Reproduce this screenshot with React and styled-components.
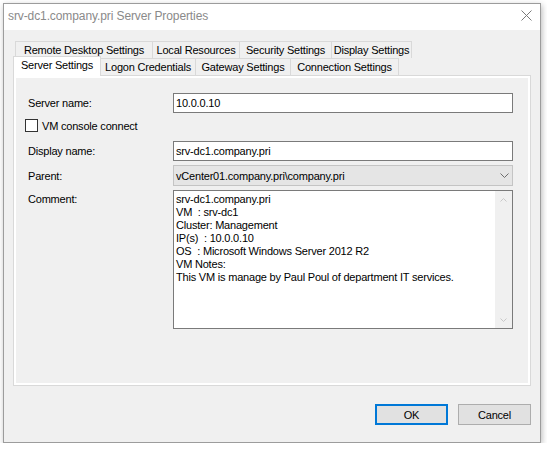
import React from "react";
import styled, { createGlobalStyle } from "styled-components";

const GlobalStyle = createGlobalStyle`
  html, body { margin: 0; padding: 0; background: #ffffff; }
  body {
    font-family: "Liberation Sans", Arial, sans-serif;
    font-size: 11px;
    letter-spacing: -0.2px;
    color: #000;
  }
  * { box-sizing: border-box; }
`;

const Page = styled.div`
  padding: 3px 0 0 3px;
`;

const Window = styled.div`
  width: 538px;
  height: 440px;
  border: 1px solid #9c9c9c;
  box-shadow: 1px 2px 6px rgba(0, 0, 0, 0.28);
  display: flex;
  flex-direction: column;
  background: #f0f0f0;
`;

const TitleBar = styled.div`
  height: 26px;
  background: #ffffff;
  display: flex;
  align-items: center;
  justify-content: space-between;
  padding: 0 8px 3px 4px;
`;

const Title = styled.span`
  font-size: 12px;
  letter-spacing: -0.1px;
  color: #8a8a8a;
`;

const Body = styled.div`
  flex: 1;
  display: flex;
  flex-direction: column;
  padding: 11px 9px 0 9px;
`;

const TabControl = styled.div`
  width: 518px;
  display: flex;
  flex-direction: column;
`;

const TabRow = styled.div`
  display: flex;
  height: 17px;
  padding-left: ${(p) => p.$offset}px;
`;

const Tab = styled.div`
  position: relative;
  width: ${(p) => p.$w}px;
  height: ${(p) => (p.$active ? 20 : 17)}px;
  margin-top: ${(p) => (p.$active ? -2 : 0)}px;
  z-index: ${(p) => (p.$active ? 2 : 1)};
  background: ${(p) => (p.$active ? "#ffffff" : "#f0f0f0")};
  border: 1px solid #d9d9d9;
  border-bottom: none;
  display: flex;
  align-items: ${(p) => (p.$active ? "flex-start" : "center")};
  padding-top: ${(p) => (p.$active ? 2 : 0)}px;
  justify-content: center;
  white-space: nowrap;
  & + & {
    margin-left: -1px;
  }
`;

const Panel = styled.div`
  height: 311px;
  border: 1px solid #d9d9d9;
  background: #ffffff;
  padding: 2px;
`;

const PageArea = styled.div`
  height: 100%;
  background: #f0f0f0;
  display: flex;
  flex-direction: column;
  padding: 15px 0 0 12px;
`;

const FieldRow = styled.div`
  display: flex;
  align-items: ${(p) => (p.$top ? "flex-start" : "center")};
  margin-top: ${(p) => p.$mt}px;
`;

const Label = styled.div`
  width: 145px;
  flex: none;
  padding-top: ${(p) => (p.$top ? 3 : 0)}px;
`;

const TextInput = styled.input`
  width: 340px;
  height: 20px;
  border: 1px solid #7a7a7a;
  background: #ffffff;
  padding: 0 2px;
  margin: 0;
  font-family: inherit;
  font-size: 11px;
  letter-spacing: -0.2px;
  color: #000;
  outline: none;
`;

const CheckRow = styled.label`
  display: flex;
  align-items: center;
  gap: 4px;
  margin-top: ${(p) => p.$mt}px;
  margin-left: -3px;
  height: 13px;
`;

const CheckBox = styled.span`
  width: 13px;
  height: 13px;
  border: 1px solid #333333;
  background: #ffffff;
  flex: none;
`;

const ComboBox = styled.div`
  width: 340px;
  height: 21px;
  border: 1px solid #c4c4c4;
  background: #e5e5e5;
  display: flex;
  align-items: center;
  padding: 0 3px 0 2px;
`;

const ComboText = styled.span`
  flex: 1;
`;

const CommentBox = styled.div`
  width: 340px;
  height: 139px;
  border: 1px solid #7a7a7a;
  background: #ffffff;
  display: flex;
`;

const CommentText = styled.div`
  flex: 1;
  white-space: pre;
  line-height: 13px;
  padding: 2px 2px;
`;

const ScrollBar = styled.div`
  width: 17px;
  background: #f0f0f0;
  display: flex;
  flex-direction: column;
  justify-content: space-between;
  align-items: center;
  padding: 7px 0 6px;
`;

const Footer = styled.div`
  display: flex;
  justify-content: flex-end;
  gap: 10px;
  margin-top: 18px;
`;

const Button = styled.button`
  width: 73px;
  height: 21px;
  margin: 0;
  padding: 0;
  background: #e1e1e1;
  border: ${(p) => (p.$default ? "2px solid #0078d7" : "1px solid #adadad")};
  font-family: inherit;
  font-size: 11px;
  letter-spacing: -0.2px;
  color: #000;
`;

const Chevron = ({ up, color, w = 9, h = 5 }) => (
  <svg width={w} height={h} viewBox={`0 0 ${w} ${h}`}>
    <polyline
      points={up ? `0.5,${h - 0.5} ${w / 2},0.5 ${w - 0.5},${h - 0.5}` : `0.5,0.5 ${w / 2},${h - 0.5} ${w - 0.5},0.5`}
      fill="none"
      stroke={color}
      strokeWidth="1"
    />
  </svg>
);

const CloseIcon = () => (
  <svg width="11" height="11" viewBox="0 0 11 11">
    <path d="M0.5 0.5 L10.5 10.5 M10.5 0.5 L0.5 10.5" stroke="#7a7a7a" strokeWidth="1" fill="none" />
  </svg>
);

const backTabs = [
  { label: "Remote Desktop Settings", w: 138 },
  { label: "Local Resources", w: 88 },
  { label: "Security Settings", w: 93 },
  { label: "Display Settings", w: 81 },
];

const frontTabs = [
  { label: "Server Settings", w: 88, active: true },
  { label: "Logon Credentials", w: 96 },
  { label: "Gateway Settings", w: 96 },
  { label: "Connection Settings", w: 109 },
];

const comment = [
  "srv-dc1.company.pri",
  "VM  : srv-dc1",
  "Cluster: Management",
  "IP(s)  : 10.0.0.10",
  "OS  : Microsoft Windows Server 2012 R2",
  "VM Notes:",
  "This VM is manage by Paul Poul of department IT services.",
].join("\n");

export default function App() {
  return (
    <>
      <GlobalStyle />
      <Page>
        <Window>
          <TitleBar>
            <Title>srv-dc1.company.pri Server Properties</Title>
            <CloseIcon />
          </TitleBar>
          <Body>
            <TabControl>
              <TabRow $offset={2}>
                {backTabs.map((t) => (
                  <Tab key={t.label} $w={t.w}>
                    {t.label}
                  </Tab>
                ))}
              </TabRow>
              <TabRow $offset={0}>
                {frontTabs.map((t) => (
                  <Tab key={t.label} $w={t.w} $active={t.active}>
                    {t.label}
                  </Tab>
                ))}
              </TabRow>
              <Panel>
                <PageArea>
                  <FieldRow $mt={0}>
                    <Label>Server name:</Label>
                    <TextInput readOnly value="10.0.0.10" />
                  </FieldRow>
                  <CheckRow $mt={6}>
                    <CheckBox />
                    <span>VM console connect</span>
                  </CheckRow>
                  <FieldRow $mt={9}>
                    <Label>Display name:</Label>
                    <TextInput readOnly value="srv-dc1.company.pri" />
                  </FieldRow>
                  <FieldRow $mt={4}>
                    <Label>Parent:</Label>
                    <ComboBox>
                      <ComboText>vCenter01.company.pri\company.pri</ComboText>
                      <Chevron color="#6d6d6d" w={9} h={5} />
                    </ComboBox>
                  </FieldRow>
                  <FieldRow $mt={4} $top>
                    <Label $top>Comment:</Label>
                    <CommentBox>
                      <CommentText>{comment}</CommentText>
                      <ScrollBar>
                        <Chevron up color="#c8c8c8" w={7} h={4} />
                        <Chevron color="#c8c8c8" w={7} h={4} />
                      </ScrollBar>
                    </CommentBox>
                  </FieldRow>
                </PageArea>
              </Panel>
            </TabControl>
            <Footer>
              <Button $default>OK</Button>
              <Button>Cancel</Button>
            </Footer>
          </Body>
        </Window>
      </Page>
    </>
  );
}
